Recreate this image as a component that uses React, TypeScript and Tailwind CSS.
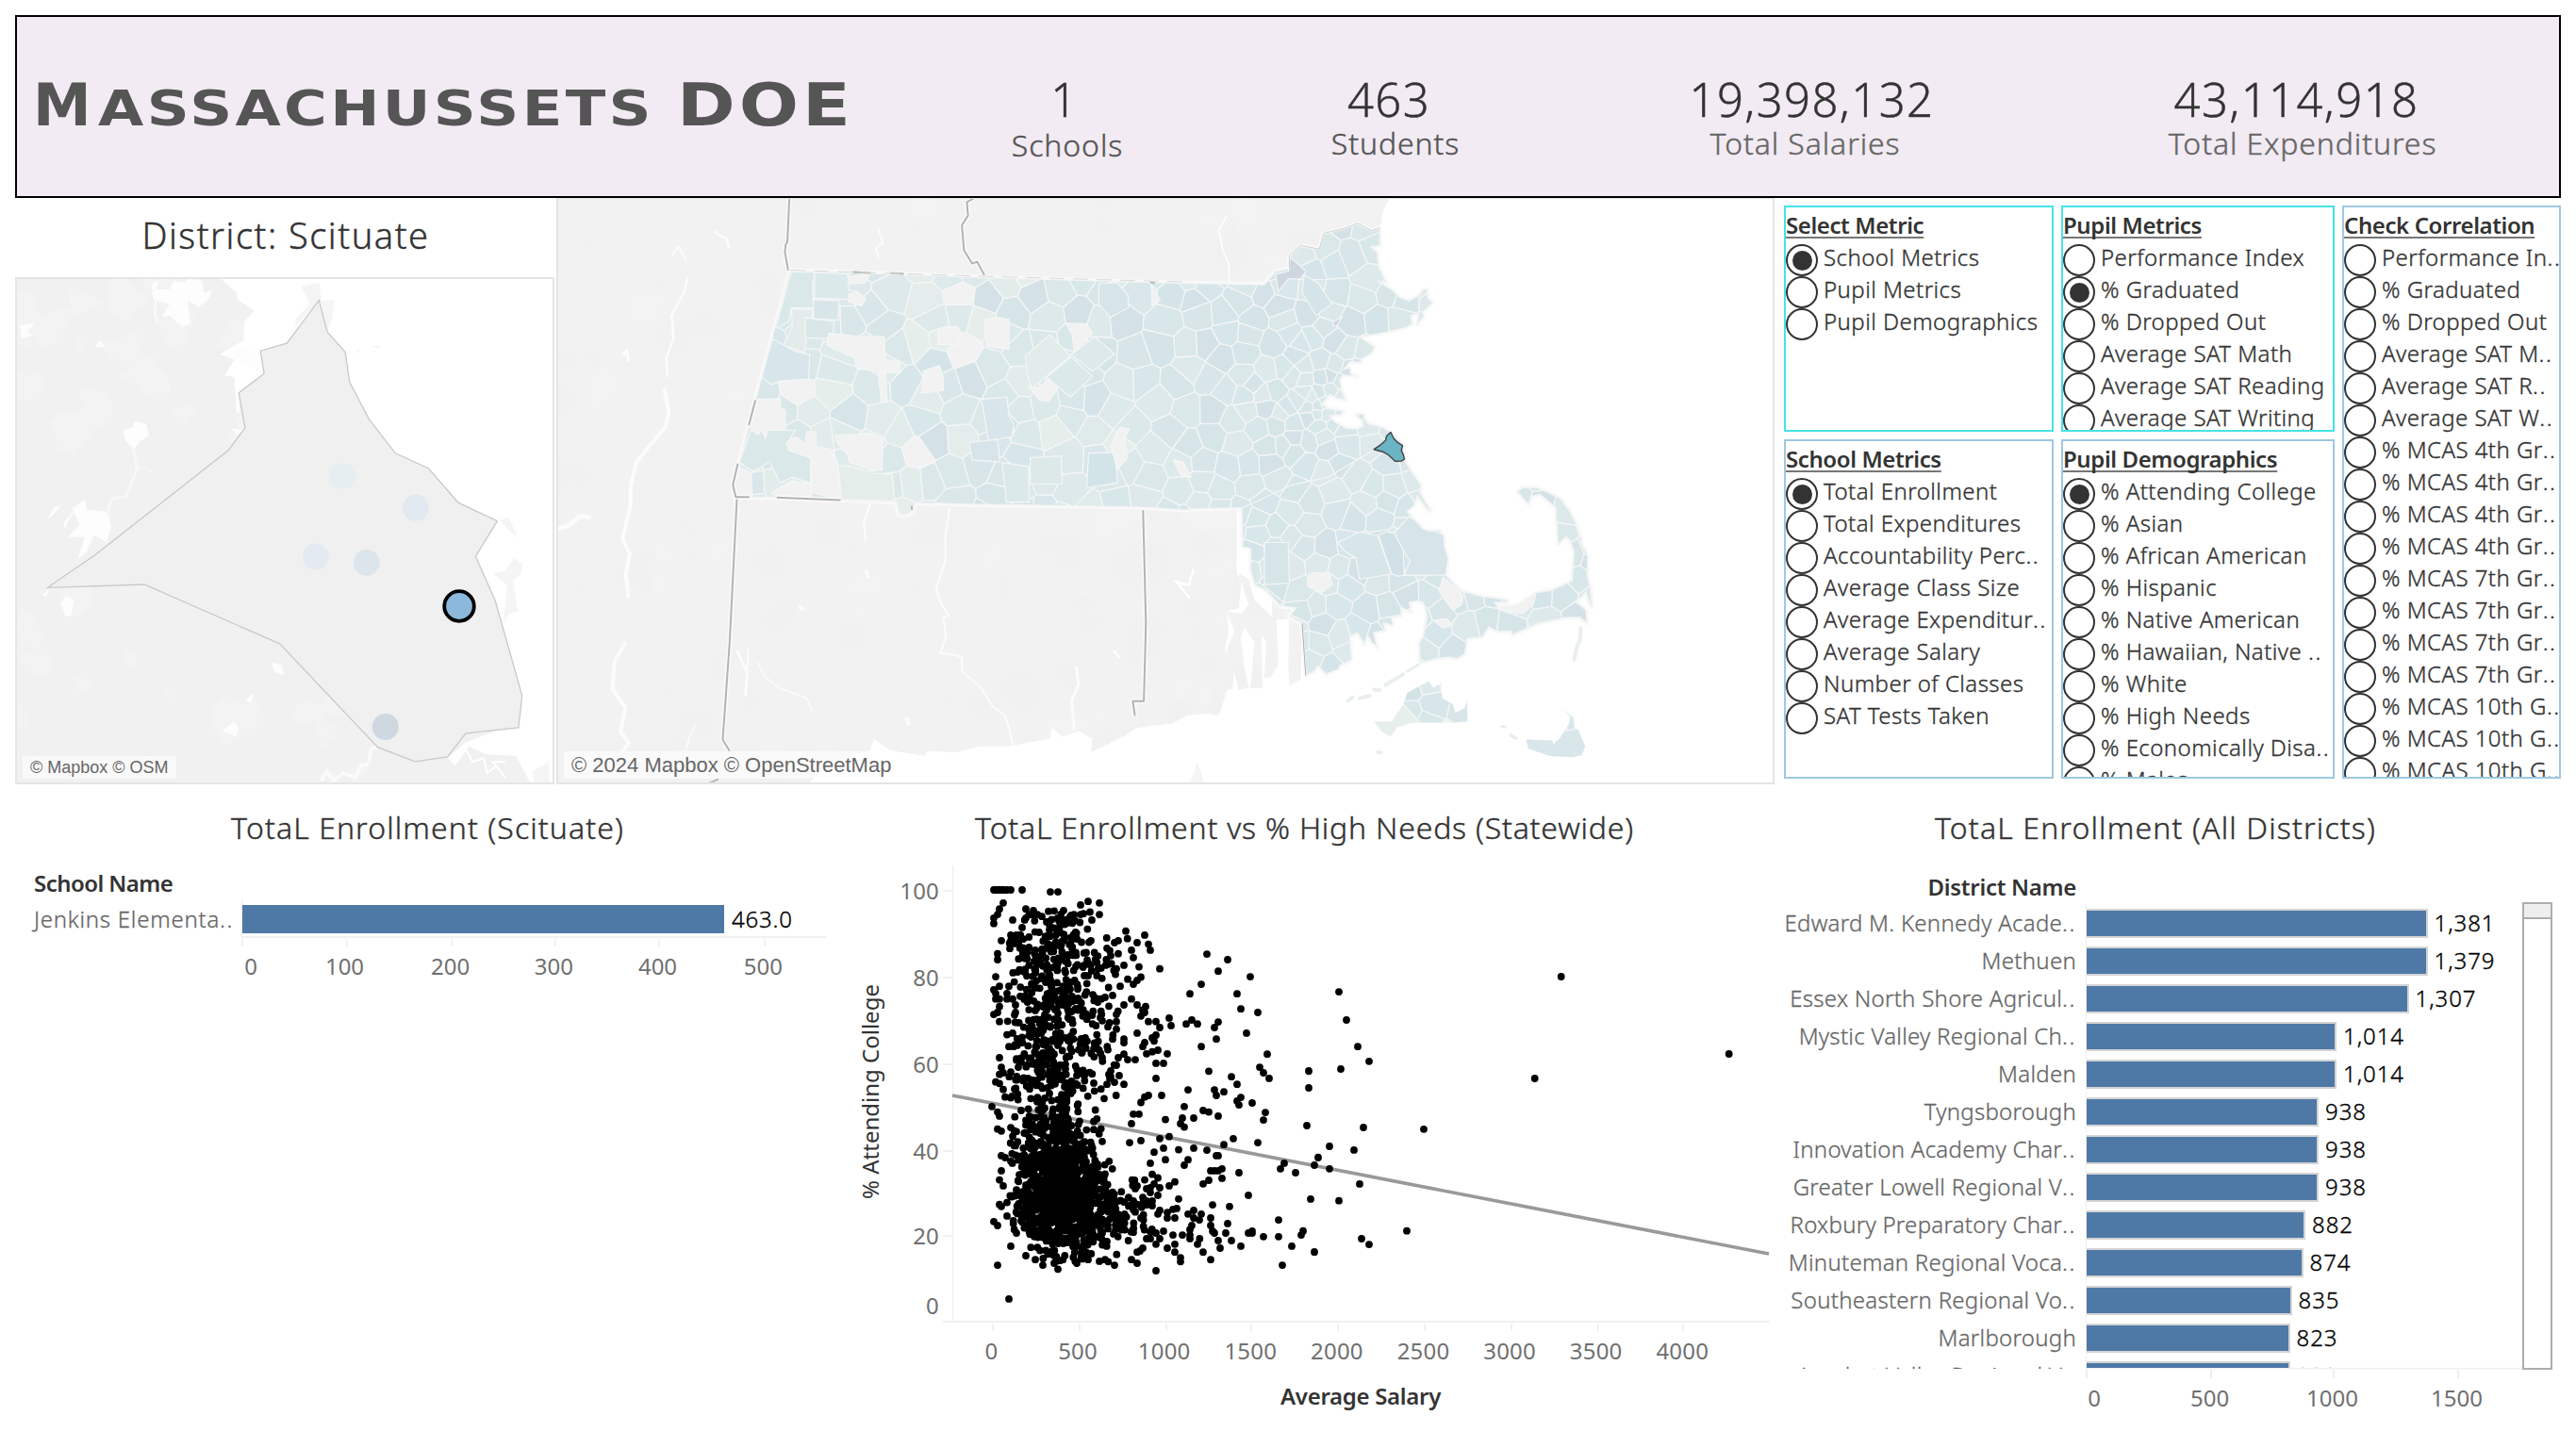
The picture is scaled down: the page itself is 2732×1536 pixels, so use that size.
type Pt = [number, number];

// Deterministic pseudo random generator
function rng(seed: number) {
  let s = seed;
  return () => {
    s |= 0;
    s = (s + 0x6d2b79f5) | 0;
    let t = Math.imul(s ^ (s >>> 15), 1 | s);
    t = (t + Math.imul(t ^ (t >>> 7), 61 | t)) ^ t;
    return ((t ^ (t >>> 14)) >>> 0) / 4294967296;
  };
}

const parse = (s: string): Pt[] => s.trim().split(/\s+/).map((p) => p.split(",").map(Number) as Pt);
const project = (ox: number, oy: number, sx: number, sy: number) => (s: string): Pt[] =>
  parse(s).map(([x, y]) => [ox + x / sx, oy + y / sy]);
const toPath = (pts: Pt[], close = true) =>
  "M" + pts.map(([x, y]) => `${x.toFixed(1)} ${y.toFixed(1)}`).join("L") + (close ? "Z" : "");

const west = project(580, 200, 2.306, 2.45);
const east = project(1240, 200, 2.376, 2.45);
const town = project(0, 200, 2.613, 2.45);

// Label whose trailing ".." is set a little wider than the rest
function Clipped({ text }: { text: string }) {
  if (!text.endsWith("..")) return <>{text}</>;
  return (
    <>
      {text.slice(0, -2)}
      <span className="tracking-[1.6px]">..</span>
    </>
  );
}

/* ---------------------------------- header --------------------------------- */

const KPIS = [
  { value: "1", label: "Schools", col: "w-[346px]", v: "pr-1", l: "pl-0.5 text-[#555] mt-[2px]" },
  { value: "463", label: "Students", col: "w-[346px]", v: "pr-2", l: "pl-1.5 text-[#555]" },
  { value: "19,398,132", label: "Total Salaries", col: "w-[536px]", v: "pl-[7px]", l: "pr-[7px] text-[#666]" },
  { value: "43,114,918", label: "Total Expenditures", col: "w-[506px]", v: "pr-[7px]", l: "pl-1.5 text-[#666]" },
];

function Header() {
  return (
    <header className="flex h-[194px] border-2 border-black bg-[#f2ebf3]">
      <h1 className="flex w-[940px] shrink-0 items-baseline pt-[58px] pl-[17px] font-['DejaVu_Sans'] text-[62px] leading-[72px] font-bold text-[#555]">
        <span className="inline-block w-[69px] shrink-0">
          <span className="inline-block origin-left">M</span>
        </span>
        <span className="inline-block w-[614px] shrink-0">
          <span className="inline-block origin-left scale-x-120 text-[52px] tracking-[2.8px]">ASSACHUSSETS</span>
        </span>
        <span className="inline-block origin-left scale-x-120 tracking-[3.3px]">DOE</span>
      </h1>
      {KPIS.map((k) => (
        <div key={k.label} className={`${k.col} shrink-0 pt-[59px] text-center font-light [-webkit-text-stroke:0.4px]`}>
          <div className={`${k.v} text-[49px] leading-[56px] tracking-[1.4px] text-[#333]`}>{k.value}</div>
          <div className={`${k.l} text-[32px] leading-[38px] tracking-[0.9px]`}>{k.label}</div>
        </div>
      ))}
    </header>
  );
}

/* -------------------------------- district map ----------------------------- */

const T_SEA =
  "610,233 655,270 660,290 705,318 678,345 675,395 610,430 650,445 622,485 650,490 655,580 664,585 662,531 732,481 722,422 795,402 884,290 907,373 957,425 969,503 1023,600 1096,688 1187,727 1270,816 1378,864 1318,956 1372,1070 1447,1318 1437,1401 1385,1405 1290,1440 1240,1480 1262,1500 1300,1450 1345,1470 1430,1475 1470,1545 1537,1545 1537,233";
const T_DISTRICT =
  "884,290 907,373 957,425 969,503 1023,600 1096,688 1187,727 1270,816 1378,864 1318,956 1372,1070 1447,1318 1437,1401 1290,1416 1240,1477 1150,1489 1047,1452 775,1183 400,1029 132,1037 265,951 633,680 679,622 662,531 732,481 722,422 795,402";
const T_SPITS = [
  "835,255 885,245 890,290 928,290 920,340 905,375 884,290 815,362 822,335 860,300",
  "1385,862 1410,855 1435,908 1410,890",
  "1365,1000 1400,995 1425,960 1447,975 1445,1000 1422,1020 1435,1100 1410,1105 1395,1130 1405,1030",
  "985,420 995,418 992,428",
  "1032,410 1055,408 1045,415",
  "1475,1515 1520,1490 1525,1545 1480,1545",
];
const T_WATER = [
  "420,250 440,240 432,262 470,262 480,240 512,245 520,233 560,240 566,270 590,265 575,290 550,308 520,290 528,350 505,360 470,330 448,335 470,300 425,288",
  "342,628 368,620 372,605 405,612 413,640 385,660 372,678 348,655",
  "200,830 235,808 240,835 300,840 308,880 295,920 262,900 240,945 215,965 235,905 188,905 220,875",
  "175,870 215,825 190,862 180,885",
  "130,860 150,828 168,824 150,845",
  "168,1080 182,1058 205,1068 198,1110 182,1113",
  "752,1232 780,1238 788,1265 762,1258",
  "615,1410 650,1385 662,1405 655,1425",
  "55,355 95,350 75,375 92,380 60,390",
  "262,412 278,395 293,412",
  "118,1058 135,1042 128,1060",
  "680,1328 705,1310 695,1338",
  "640,625 676,626 660,640",
  "610,430 690,405 722,420 725,480 680,455",
];

const SCHOOLS: [number, number, string][] = [
  [949, 747, "#e6eef1"],
  [1152, 830, "#e1e8ef"],
  [875, 957, "#e4eaf1"],
  [1016, 972, "#dde5ec"],
  [1068, 1399, "#cfd7e0"],
];

function blobs(seed: number, n: number, x0: number, y0: number, w: number, h: number, size: number) {
  const r = rng(seed);
  let d = "";
  for (let i = 0; i < n; i++) {
    const cx = x0 + r() * w;
    const cy = y0 + r() * h;
    const s = size * (0.3 + r());
    const pts: Pt[] = [];
    for (let k = 0; k < 9; k++) {
      const a = (k / 9) * Math.PI * 2;
      const q = s * (0.45 + r() * 0.8);
      pts.push([cx + Math.cos(a) * q, cy + Math.sin(a) * q]);
    }
    d += toPath(pts);
  }
  return d;
}

function DistrictMap() {
  return (
    <div className="relative h-[538px] w-[572px] border-2 border-[#e5e5e5]">
      <svg viewBox="18 296 568 534" className="block h-full w-full">
        <rect x="16" y="294" width="572" height="538" fill="#f1f1f1" />
        <path d={blobs(5, 26, 16, 300, 260, 180, 24)} fill="#f5f5f5" opacity="0.5" />
        <path d={blobs(8, 22, 16, 560, 460, 260, 22)} fill="#f3f3f3" opacity="0.7" />
        <path d={toPath(town(T_SEA))} fill="#fff" />
        {T_SPITS.map((s) => (
          <path key={s} d={toPath(town(s))} fill="#f5f5f5" />
        ))}
        {T_WATER.map((s) => (
          <path key={s} d={toPath(town(s))} fill="#fdfdfd" />
        ))}
        <path d={toPath(town("368,670 380,728 350,800 310,805 295,850"), false)} fill="none" stroke="#f8f8f8" strokeWidth="3" />
        <path d={toPath(town("380,728 405,726 420,738"), false)} fill="none" stroke="#f8f8f8" strokeWidth="2" />
        <path d={toPath(town("432,240 430,330 436,350"), false)} fill="none" stroke="#fbfbfb" strokeWidth="2" />
        <path
          d={toPath(town("890,1540 905,1515 925,1538 950,1520 985,1530 1000,1500 1020,1495 1030,1455 1045,1452"), false)}
          fill="none"
          stroke="#fafafa"
          strokeWidth="4"
        />
        <path
          d={toPath(town("1290,1455 1310,1490 1340,1480 1350,1520 1375,1500 1400,1530 1365,1490 1400,1490"), false)}
          fill="none"
          stroke="#fff"
          strokeWidth="2"
        />
        <path d={toPath(town(T_DISTRICT))} fill="#f0f0f0" stroke="#c9c9c9" strokeWidth="1.3" />
        {SCHOOLS.map(([x, y, c]) => (
          <circle key={x} cx={x / 2.613} cy={200 + y / 2.45} r="14" fill={c} />
        ))}
        <circle cx="487" cy="643" r="15.8" fill="#8bb8db" stroke="#000" strokeWidth="3.8" />
      </svg>
      <div className="absolute bottom-[4px] left-[6px] h-6 bg-white/60 px-2 font-['Liberation_Sans',sans-serif] text-[18px] leading-6 text-[#666]">
        © Mapbox © OSM
      </div>
    </div>
  );
}

/* --------------------------------- state map ------------------------------- */

const MA: Pt[] = [
  ...west("595,213 660,215 830,222 1100,232 1568,246"),
  ...east(
    "240,250 268,215 303,208 303,175 330,150 378,158 390,118 440,105 475,92 510,110 531,103 531,148 508,152 524,165 528,205 548,245 525,240 560,262 580,282 605,292 632,275 640,262 650,262 652,285 665,297 640,320 641,335 625,353 628,325 610,330 612,352 595,362 540,375 480,386 518,412 508,430 490,440 480,452 455,450 440,470 455,465 458,482 474,488 440,485 430,495 435,525 445,550 420,545 405,535 385,560 400,572 440,578 432,588 405,590 415,605 445,622 470,625 490,618 485,602 470,588 488,586 500,610 540,622 558,633 590,665 592,705 635,772 632,790 660,838 652,836 625,800 618,822 600,840 640,885 655,890 680,888 692,902 694,930 703,960 697,1005 735,1045 790,1060 850,1068 852,1075 820,1076 830,1090 880,1082 925,1050 960,1045 1015,1020 1020,945 1010,915 1000,905 980,925 975,850 975,830 935,795 915,800 905,820 877,788 890,777 930,778 985,805 1010,840 1030,880 1040,925 1055,955 1053,1005 1062,1040 1066,1088 1060,1080 1050,1050 1025,1075 1050,1095 1053,1130 1035,1115 1000,1115 930,1130 865,1160 862,1150 830,1152 805,1140 790,1165 750,1170 745,1210 725,1222 708,1218 675,1222 632,1232 630,1180 640,1165 650,1110 640,1075 625,1072 605,1075 610,1100 585,1090 585,1110 560,1115 565,1135 540,1130 545,1148 515,1155 525,1192 510,1180 500,1160 492,1185 475,1155 455,1165 460,1225 430,1240 425,1250 395,1262 375,1240 365,1255 345,1265 335,1130 302,1112 320,1090 280,1085 262,1065 245,1045 215,1030 205,990 205,935 185,932 183,830 47,833",
  ),
  ...west(
    "1568,836 1455,828 1000,820 960,818 900,818 895,838 880,848 862,848 855,815 720,810 560,803 460,803 455,770 470,715 510,550",
  ),
];
const VINEYARD = east(
  "515,1385 560,1385 590,1340 600,1310 655,1280 665,1298 685,1285 688,1325 715,1340 722,1362 745,1350 750,1330 752,1385 720,1388 610,1388 575,1400 558,1425 535,1412",
);
const NANTUCKET = east(
  "900,1432 965,1435 968,1445 985,1428 1008,1390 1010,1372 992,1352 1018,1375 1022,1405 1030,1405 1048,1450 1040,1472 1015,1478 960,1475 905,1455",
);
const SCITUATE = east(
  "516,678 530,668 545,655 548,643 558,633 566,650 576,660 588,668 585,680 590,692 593,703 586,708 570,709 552,692 538,684",
);
const LAND: Pt[] = [
  [588, 206],
  ...east("557,20 538,60 535,85 531,103 480,240 300,600 300,800 335,1130 332,1275 303,1292 300,1240 302,1120 270,1120 275,1240 255,1270 240,1270 245,1180 232,1160 235,1298 205,1298 215,1180 190,1140 180,1170 190,1250 200,1298 175,1302 165,1260 145,1200 165,1150 145,1100 185,1105 200,1080 175,1000 200,1015 215,1070 260,1115 255,900 170,835"),
  ...east("170,1000 182,1020 175,1090 145,1100 150,1150 140,1200 165,1230 160,1300 145,1305 125,1370 100,1365"),
  ...west("1568,1368 1530,1390 1440,1402 1415,1422 1330,1465 1335,1430 1300,1410 1260,1425 1235,1400 1230,1430 1200,1435 1130,1450 1060,1450 1000,1465 930,1462 925,1475 840,1460 800,1430 790,1460 700,1490 640,1545 600,1568 20,1568"),
  [588, 832],
];
const RIVERS: [string, number][] = [
  ["345,230 335,270 305,330 310,390 292,440 295,490", 2.5],
  ["287,520 298,580 290,620 250,670 220,710", 4],
  ["220,710 205,770 205,820 185,910 203,950 193,1000 200,1065", 4],
  ["192,1180 165,1230 160,1300 192,1350 180,1410 200,1440 180,1470", 4],
  ["985,830 975,900 975,965 952,1040 965,1080 983,1110 970,1115 976,1165 962,1207 1000,1212 1015,1220 1015,1255 1060,1295 1090,1345 1120,1370 1130,1400 1140,1450", 2],
  ["790,820 775,870 780,915", 2],
  ["1295,1240 1300,1290 1283,1330 1290,1410", 3],
  ["515,1230 530,1265 570,1300 600,1310 635,1325 650,1358", 1.5],
  ["465,1200 490,1260 485,1320", 3],
  ["493,1195 488,1290", 2],
  ["410,110 420,120 440,130 445,155", 2.5],
  ["305,175 322,150 340,185", 2],
  ["810,105 822,140 805,155 810,180", 2],
  ["20,885 50,878 80,852 108,855", 5],
  ["185,435 195,420 200,450", 3],
  ["340,1460 350,1420 365,1390", 1.5],
  ["780,990 785,1012", 3],
  ["1385,1200 1402,1220", 3],
  ["615,1085 628,1095", 4],
  ["880,1375 885,1395", 4],
  ["1538,1020 1560,1030", 3],
];
const BORDERS = [
  "593,25 588,140 584,145 582,165 590,213",
  "1045,25 1027,35 1030,70 1015,95 1020,160 1040,195 1052,190 1070,225",
  "465,803 447,1180 430,1432 447,1462",
  "1458,836 1465,1130 1460,1332 1433,1332 1438,1370",
  "494,615 510,550",
  "467,715 455,770 462,802 495,802",
  "562,803 718,810",
];
const SHORT_BORDERS = ["748,217 792,219", "840,220 873,222", "1475,244 1487,245", "397,1545 420,1535", "892,825 893,835"];

const TINTS_WEST = ["#e4edeb", "#dfebea", "#dde9ea", "#dbe8e9", "#e6eeeb", "#e2eceb", "#dce9ea", "#d9e6ea"];
const TINTS_EAST = ["#dbe8e9", "#d8e6e9", "#d4e4e8", "#d7e6ea", "#dae8e9", "#d4e2e8", "#dde9ea", "#d6e6e8", "#d8e7e9"];

type Cell = { d: string; fill: string };

// Town mosaic: Voronoi cells grown from density-weighted seeds
function townCells(): Cell[] {
  const r = rng(42);
  const seeds: Pt[] = [];
  const radius = (x: number, y: number) => {
    const dist = Math.hypot(x - 1385, y - 425);
    const base = x < 1240 ? 22 : x < 1330 ? 19 : 18;
    return Math.min(base, 5.5 + dist * 0.13);
  };
  for (let i = 0; i < 16000; i++) {
    const x = 765 + r() * 930;
    const y = 232 + r() * 580;
    const q = radius(x, y) * (0.75 + r() * 0.7);
    if (seeds.every(([a, b]) => Math.hypot(a - x, b - y) > q * 1.12)) seeds.push([x, y]);
  }
  return seeds.map(([cx, cy]) => {
    let poly: Pt[] = [
      [cx - 45, cy - 45],
      [cx + 45, cy - 45],
      [cx + 45, cy + 45],
      [cx - 45, cy + 45],
    ];
    for (const [sx, sy] of seeds) {
      if ((sx === cx && sy === cy) || Math.abs(sx - cx) > 90 || Math.abs(sy - cy) > 90) continue;
      const nx = sx - cx;
      const ny = sy - cy;
      const k = (sx * sx + sy * sy - cx * cx - cy * cy) / 2;
      const side = (p: Pt) => p[0] * nx + p[1] * ny - k;
      const out: Pt[] = [];
      for (let i = 0; i < poly.length; i++) {
        const a = poly[i];
        const b = poly[(i + 1) % poly.length];
        const da = side(a);
        const db = side(b);
        if (da <= 0) out.push(a);
        if ((da < 0 && db > 0) || (da > 0 && db < 0)) {
          const t = da / (da - db);
          out.push([a[0] + (b[0] - a[0]) * t, a[1] + (b[1] - a[1]) * t]);
        }
      }
      poly = out;
    }
    const hole = cx < 1150 ? 0.03 : cx > 1500 && cy > 600 ? 0.1 : 0.005;
    const set = r() < (cx - 800) / 520 ? TINTS_EAST : TINTS_WEST;
    const fill = r() < hole ? "#f2f2f2" : set[Math.floor(r() * set.length)];
    return { d: toPath(poly), fill };
  });
}

const GAPS_WEST = [
  "505,548 570,546 572,570 583,575 583,628 540,628 535,650 525,628 515,640 495,620",
  "690,376 770,385 825,385 828,445 865,450 862,480 815,475 760,468 752,440 685,408",
  "705,642 790,636 822,650 820,730 800,735 740,712 735,690 712,665",
  "1070,342 1100,335 1130,340 1130,418 1075,410",
  "590,655 610,645 632,665 635,632 658,632 658,670 700,680 712,720 718,808 648,790 645,700 590,680",
  "735,228 790,224 778,245 742,248",
  "738,275 760,268 780,285 770,305 738,295",
  "920,475 960,460 970,490 970,525 915,532 922,500",
  "955,365 1005,358 1012,380 1005,405 958,405",
  "1270,350 1320,352 1335,375 1290,425 1285,380",
  "1180,515 1210,520 1222,495 1250,520 1228,552 1205,550",
  "470,725 500,740 502,800 465,803 458,770",
  "550,790 600,760 645,765 648,800 560,803",
  "1400,620 1425,625 1412,650 1420,700 1395,730 1380,670",
  "810,475 828,478 832,555 818,555",
  "1478,250 1500,290 1480,305",
];
const GAPS_EAST = [
  "348,1010 360,998 405,1000 410,1030 385,1050 350,1035",
  "690,1010 720,1035 740,1055 738,1080 715,1095 695,1070 680,1045",
  "830,1090 885,1065 925,1048 918,1080 890,1105 855,1100",
  "10,705 35,710 55,750 30,745",
  "665,1122 700,1118 715,1135 690,1142",
];
// Larger towns drawn on top of the mosaic
const TOWNS_WEST: [string, string][] = [
  ["598,216 655,218 650,250 652,310 598,310 592,345 565,362 560,360", "#dae8e9"],
  ["655,218 738,222 738,265 760,268 738,288 655,285", "#dce9eb"],
  ["652,288 715,291 713,342 652,338", "#d8e6ea"],
  ["598,312 648,314 650,335 635,340 638,370 630,425 578,408 600,360", "#e3ecea"],
  ["632,336 703,345 700,375 682,390 632,388", "#dae7e9"],
  ["552,390 605,422 643,432 640,495 570,500 550,510 525,490", "#d8e6eb"],
  ["500,628 608,628 585,665 645,702 645,765 600,750 570,765 545,710 505,735 470,712", "#dae8e9"],
  ["712,722 738,720 800,740 845,742 850,812 722,808", "#e4edea"],
  ["1063,548 1125,542 1130,590 1142,612 1138,645 1080,655", "#d8e5eb"],
  ["1222,490 1282,438 1335,488 1280,542", "#dce9ea"],
  ["1282,432 1340,385 1388,430 1335,475", "#dde9ea"],
  ["1170,435 1230,380 1280,435 1222,488 1185,520 1175,480", "#e2ecea"],
  ["1325,688 1390,685 1396,765 1320,778", "#d3e4e9"],
  ["1350,248 1395,245 1422,278 1422,310 1378,335 1350,300", "#d5e5ea"],
  ["1033,660 1102,652 1108,710 1040,706", "#d7e4ea"],
  ["1113,712 1178,722 1180,815 1124,815", "#dce9ea"],
  ["1182,700 1258,695 1260,768 1182,768", "#dde9e8"],
];
const TOWNS_EAST: [string, string][] = [
  ["705,960 700,1005 592,1005 607,968 590,940 567,895 605,852 655,885 692,900", "#d7e5ea"],
  ["527,900 548,892 567,895 590,940 592,1005 577,1008 560,1000", "#d1e1e7"],
  ["425,920 480,892 525,902 560,1002 480,1015 470,960 440,940", "#d6e6e9"],
  ["240,920 300,920 303,1025 240,1030", "#d6e6e8"],
  ["340,225 375,245 410,300 370,330 335,270", "#d4e4e8"],
  ["268,222 300,215 305,178 345,215 330,235 300,235 275,268", "#ced6e0"],
  ["415,345 435,335 422,358 412,355", "#ced6e0"],
];

function StateMap() {
  return (
    <div className="relative h-[622px] w-[1292px] border-2 border-t border-[#e5e5e5]">
      <svg viewBox="592 211 1288 619" className="block h-full w-full">
        <defs>
          <clipPath id="mass">
            <path d={toPath(MA) + toPath(VINEYARD) + toPath(NANTUCKET)} />
          </clipPath>
          <clipPath id="land">
            <path d={toPath(LAND)} />
          </clipPath>
        </defs>
        <path d={toPath(LAND)} fill="#f2f2f2" />
        <g clipPath="url(#land)">
          <path d={blobs(3, 110, 590, 210, 800, 620, 20)} fill="#efefef" opacity="0.45" />
          <path d={blobs(9, 70, 590, 210, 800, 620, 18)} fill="#f4f4f4" opacity="0.6" />
        </g>
        {RIVERS.map(([s, w]) => (
          <path key={s} d={toPath(west(s), false)} fill="none" stroke="#fcfcfc" strokeWidth={w} strokeLinejoin="round" />
        ))}
        <path d={toPath(east("145,70 125,110 135,160 150,195 152,245"), false)} fill="none" stroke="#fff" strokeWidth="1.5" />
        <path d={toPath(east("62,988 50,1030 18,1022 52,1065"), false)} fill="none" stroke="#fff" strokeWidth="2.5" />
        <path d={toPath(MA)} fill="#f2f2f2" stroke="#fafafa" strokeWidth="5" strokeLinejoin="round" />
        <g clipPath="url(#mass)" stroke="#f5f6f6" strokeWidth="1.2">
          {townCells().map((c) => (
            <path key={c.d} d={c.d} fill={c.fill} />
          ))}
          {TOWNS_WEST.map(([s, fill]) => (
            <path key={s} d={toPath(west(s))} fill={fill} />
          ))}
          {GAPS_WEST.map((s) => (
            <path key={s} d={toPath(west(s))} fill="#f2f2f2" />
          ))}
          {GAPS_EAST.map((s) => (
            <path key={s} d={toPath(east(s))} fill="#f2f2f2" />
          ))}
          {TOWNS_EAST.map(([s, fill]) => (
            <path key={s} d={toPath(east(s))} fill={fill} />
          ))}
          <path d={toPath(east("185,830 310,770 400,750 515,680"), false)} fill="none" />
          <path d={toPath(east("515,1385 560,1385 590,1340 632,1388 575,1400 558,1425 535,1412"))} fill="#e7efec" />
          <path d={toPath(east("895,1425 1060,1400 1060,1490 895,1490"))} fill="#d9e6ea" />
        </g>
        <path d={toPath(MA)} fill="none" stroke="#f4f4f4" strokeWidth="1.5" />
        <g fill="none" stroke="#e9eeee" strokeLinecap="round">
          <path d={toPath(east("450,1332 462,1322"), false)} strokeWidth="4" />
          <path d={toPath(east("480,1325 505,1318"), false)} strokeWidth="4" />
          <path d={toPath(east("516,1302 530,1304"), false)} strokeWidth="4" />
          <path d={toPath(east("545,1290 590,1262"), false)} strokeWidth="4" />
          <path d={toPath(east("600,1255 628,1238"), false)} strokeWidth="3" />
          <path d={toPath(east("838,1398 846,1399"), false)} strokeWidth="3" />
          <path d={toPath(east("860,1420 873,1428"), false)} strokeWidth="4" />
          <path d={toPath(east("525,1464 534,1466"), false)} strokeWidth="4" />
          <path d={toPath(east("1037,1142 1036,1170 1028,1190 1020,1224"), false)} strokeWidth="4" />
        </g>
        <path d={toPath(east("70,1490 82,1520 85,1545 52,1545 60,1525"))} fill="#f5f5f5" />
        {BORDERS.map((s) => (
          <g key={s} fill="none" strokeLinejoin="round">
            <path d={toPath(west(s), false)} stroke="#fbfbfb" strokeWidth="5" />
            <path d={toPath(west(s), false)} stroke="#b3b3b3" strokeWidth="2" />
          </g>
        ))}
        {SHORT_BORDERS.map((s) => (
          <path key={s} d={toPath(west(s), false)} fill="none" stroke="#b8b8b8" strokeWidth="2" />
        ))}
        <path d={toPath(west("595,212 830,220 1100,229 1568,243"), false)} fill="none" stroke="#d9d9d9" strokeDasharray="16 9" />
        <path d={toPath(east("303,208 303,172 330,148 378,157 390,116 440,104 475,90 510,109 531,102"), false)} fill="none" stroke="#c9c9c9" strokeWidth="0.8" />
        <path d={toPath(east("335,1130 344,1266"), false)} fill="none" stroke="#b0b0b0" />
        <path d={toPath(SCITUATE)} fill="#6ab4c3" stroke="#444" strokeWidth="1.4" strokeLinejoin="round" />
      </svg>
      <div className="absolute bottom-[4px] left-[6px] h-[29px] bg-white/60 px-2 font-['Liberation_Sans',sans-serif] text-[22px] leading-[29px] text-[#666]">
        © 2024 Mapbox © OpenStreetMap
      </div>
    </div>
  );
}

/* -------------------------------- radio panels ----------------------------- */

function RadioPanel({ title, items, selected, className }: { title: string; items: string[]; selected?: number; className: string }) {
  return (
    <section className={`overflow-hidden border-2 whitespace-nowrap text-[#333] ${className}`}>
      <h2 className="h-[39px] text-[24px] leading-[38px] font-semibold tracking-[-0.4px] underline decoration-[#777] decoration-2 underline-offset-[3px] [text-decoration-skip-ink:none]">
        {title}
      </h2>
      {items.map((t, i) => (
        <label key={i} className="flex h-[34px]">
          <span className="flex size-[34px] shrink-0 items-center justify-center rounded-full border-2 border-[#333]">
            {i === selected && <span className="size-[21px] rounded-full bg-[#333]" />}
          </span>
          <span className="ml-[6px] text-[24px] leading-[28px] font-light tracking-[0.45px] [-webkit-text-stroke:0.35px]">
            <Clipped text={t} />
          </span>
        </label>
      ))}
    </section>
  );
}

function Panels() {
  return (
    <div className="mt-2 ml-[10px] grid h-[608px] grid-cols-[286px_290px_232px] grid-rows-[240px_360px] gap-2">
      <RadioPanel title="Select Metric" selected={0} className="border-[#45e3e8]" items={["School Metrics", "Pupil Metrics", "Pupil Demographics"]} />
      <RadioPanel
        title="Pupil Metrics"
        selected={1}
        className="border-[#45e3e8]"
        items={["Performance Index", "% Graduated", "% Dropped Out", "Average SAT Math", "Average SAT Reading", "Average SAT Writing"]}
      />
      <RadioPanel
        title="Check Correlation"
        className="row-span-2 border-[#9fc8e3]"
        items={[
          "Performance In..",
          "% Graduated",
          "% Dropped Out",
          "Average SAT M..",
          "Average SAT R..",
          "Average SAT W..",
          "% MCAS 4th Gr..",
          "% MCAS 4th Gr..",
          "% MCAS 4th Gr..",
          "% MCAS 4th Gr..",
          "% MCAS 7th Gr..",
          "% MCAS 7th Gr..",
          "% MCAS 7th Gr..",
          "% MCAS 7th Gr..",
          "% MCAS 10th G..",
          "% MCAS 10th G..",
          "% MCAS 10th G..",
        ]}
      />
      <RadioPanel
        title="School Metrics"
        selected={0}
        className="border-[#9fc8e3]"
        items={["Total Enrollment", "Total Expenditures", "Accountability Perc..", "Average Class Size", "Average Expenditur..", "Average Salary", "Number of Classes", "SAT Tests Taken"]}
      />
      <RadioPanel
        title="Pupil Demographics"
        selected={0}
        className="border-[#9fc8e3]"
        items={[
          "% Attending College",
          "% Asian",
          "% African American",
          "% Hispanic",
          "% Native American",
          "% Hawaiian, Native ..",
          "% White",
          "% High Needs",
          "% Economically Disa..",
          "% Males",
        ]}
      />
    </div>
  );
}

/* ---------------------------------- charts --------------------------------- */

function ChartTitle({ children, className }: { children: string; className: string }) {
  return (
    <h2
      className={`mt-6 h-11 text-center text-[32px] leading-[44px] font-light whitespace-nowrap text-[#333] [-webkit-text-stroke:0.4px] ${className}`}
    >
      {children}
    </h2>
  );
}

function SchoolChart() {
  const ticks: [number, number, string][] = [
    [257, 266, "0"],
    [367.5, 365.5, "100"],
    [479.5, 477.6, "200"],
    [589, 587.3, "300"],
    [699, 697.5, "400"],
    [811, 809.4, "500"],
  ];
  return (
    <section className="w-[884px]">
      <ChartTitle className="w-[875px] tracking-[1.1px]">TotaL Enrollment (Scituate)</ChartTitle>
      <div className="mt-[21px] ml-5 text-[24px] leading-8 font-semibold tracking-[-0.55px] text-[#333]">School Name</div>
      <div className="ml-5 flex h-10 items-end">
        <div className="w-[220px] text-[24px] leading-9 font-light tracking-[0.75px] whitespace-nowrap text-[#666] [-webkit-text-stroke:0.3px]">
          <Clipped text="Jenkins Elementa.." />
        </div>
        <div className="flex h-10 items-end border-l border-[#eee]">
          <div className="mb-[3px] h-[30px] w-[511px] bg-[#4e79a7]" />
          <div className="ml-2 text-[24px] leading-9 font-light tracking-[0.8px] text-black [-webkit-text-stroke:0.35px]">463.0</div>
        </div>
      </div>
      <svg viewBox="16 993 884 60" className="block h-[60px] w-[884px]">
        <rect x="256" y="993" width="621" height="2" fill="#f1f1f1" />
        {ticks.map(([x, l, t]) => (
          <g key={t}>
            <rect x={x - 1} y="996" width="2" height="8" fill="#f1f1f1" />
            <text x={l} y="1034" textAnchor="middle" className="fill-[#6f6f6f] text-[24px]">
              {t}
            </text>
          </g>
        ))}
      </svg>
    </section>
  );
}

const scatter = project(900, 840, 3, 2.376);
const scatterRight = project(1380, 840, 3, 2.306);

const OUTLIERS =
  "882,351 942,361 887,370 918,380 954,384 960,399 900,399 906,418 924,441 990,446 888,472 918,475 930,467 906,485 900,522 918,537 945,541 936,550 942,556 930,565 954,579 978,579 1020,570 990,594 1026,589 918,608 978,613 966,620 972,628 942,632 936,642 984,651 1014,660 948,660 966,655 912,675 888,675 978,684 1002,684 978,722 996,765 954,765 942,769 930,783 1068,793 906,812 924,812 900,836 1008,826 1062,822 1056,836 1068,845 1098,822 1128,803 1146,807 1176,817 894,884 930,879 990,874 1020,869 1002,898 972,908 1008,927 1050,902 1098,898 1080,927 1068,941 960,936 966,964 984,973 942,978 972,988 990,998 1020,993 1038,983 918,993 948,1000 960,1010 984,1017 966,1031 1050,1026 936,1022 918,1040 942,1041 912,1059 990,1055 984,1064 1014,1060 1032,1052 1044,1050 1038,1074 1014,1074 1080,1064 1098,1055 1098,1074 1122,1064 1116,1079 1152,1074 1158,1041 1212,1045 1206,1088 1152,1093 1092,1093 1086,1103 1032,1117 1062,1117 1086,1117 1086,1126 1117,1126 1110,1140 1038,1140 1014,1150 1038,1160 1056,1174 1056,1184 1128,1160 1152,1179 1182,1150 1176,1131 1218,1131 1200,1112 1164,1112 1158,1107 1248,1145 1272,1112 1284,1107 1284,1112 1320,1121 1368,1121 1368,1079 1410,1145 1440,1117 1446,1107 1380,1193 1482,1160 978,1207 918,1188 900,1179 936,1150 948,1126 960,1126 990,1126 978,1140 918,1160 978,1112 1002,1107 1272,1017 1470,1026 1242,960 1188,950 1188,974 1176,955 1164,955 1152,955 1146,979 1128,988 1170,917 1176,917 1140,903 1194,889 1224,874 1302,884 1386,936 1374,950 1422,960 1482,941 1494,922 1458,841 1326,808 1320,827 1284,784 1248,770 1236,779 1242,789 1170,765 1164,751 1194,756 1236,737 1218,718 1146,704 1080,751 1308,694 1320,708 1338,722 1332,661 1464,704 1464,746 1122,642 1170,623 1164,594 1176,580 1110,585 1092,575 1074,585 1266,608 1302,556 1248,547 1236,509 1086,509 1122,485 1176,452 1278,466 1206,423 1140,409";
const RIGHT_OUTLIERS =
  "827,452 1361,641 743,701 390,825 336,1074 120,489 144,558 180,623 216,659 126,678 24,682 24,724 18,816 198,821 90,867 168,876 54,894 42,913 90,922 186,959 30,996 120,1000 6,1074 192,1093 216,1107 42,1125";
const LEFT_POINTS =
  "462,247 467,247 472,247 477,247 482,247 488,247 494,247 504,247 516,247 552,247 642,252 666,252 492,280 480,295 474,309 462,318 462,332 522,323 486,375 474,408 474,423 468,466 480,490 462,499 468,508 468,522 480,522 480,541 474,556 462,561 480,579 510,642 480,670 486,694 480,712 492,708 468,731 480,735 492,750 498,769 456,793 474,807 480,817 474,850 486,855 516,361 516,375 534,361 564,295 588,299 564,318 552,342 738,285 762,276 798,280 798,309 684,299 510,490 504,508 504,522 522,522 504,612 522,608 486,917 498,922 516,931 486,955 480,978 492,993 480,1040 486,1045 504,1035 504,1069 462,1083 474,1093 516,1145 534,1112 474,1193 510,1278 564,1169 594,1179 618,1193 666,1203 654,1188 726,1188 798,1183 816,1179 846,1193 738,309 774,323 876,437 852,446 846,380 858,375 834,413 858,408 876,537 840,513 816,518 864,490 852,561 852,579 852,598 840,623 876,623 876,632 876,661 858,670 888,675 852,689 876,737 846,732 834,703 834,718 822,737";

function scatterCloud(): Pt[] {
  const r = rng(77);
  const gauss = () => Math.sqrt(-2 * Math.log(r() + 1e-9)) * Math.cos(2 * Math.PI * r());
  const pts: string[] = [];
  const add = (n: number, gen: () => Pt, ok: (p: Pt) => boolean) => {
    let k = 0;
    while (k < n) {
      const p = gen();
      if (ok(p)) {
        pts.push(`${p[0].toFixed(0)},${p[1].toFixed(0)}`);
        k++;
      }
    }
  };
  // dense lower core
  add(
    780,
    () => [680 + gauss() * 75, 1035 + gauss() * 72],
    ([x, y]) => x > 520 && x < 860 && y > 850 && y < 1185 - Math.max(0, 620 - x) * 0.7,
  );
  add(290, () => [645 + gauss() * 72, 890 + gauss() * 60], ([x, y]) => x > 510 && x < 810 && y > 770 && y < 1050);
  // upper spread
  add(350, () => [670 + gauss() * 110, 300 + r() * 480], ([x, y]) => x > 505 && x < 870 && (y > 350 || Math.abs(x - 670) < 110));
  add(140, () => [665 + gauss() * 85, 340 + r() * 260], ([x]) => x > 530 && x < 830);
  add(60, () => [630 + gauss() * 60, 600 + r() * 180], ([x]) => x > 530);
  // right shoulder
  add(85, () => [860 + gauss() * 60, 1060 + gauss() * 50], ([x, y]) => x > 780 && x < 970 && y < 1170);
  return scatter(pts.join(" "));
}

const dots = (pts: Pt[]) => pts.map(([x, y]) => `M${x.toFixed(1)} ${y.toFixed(1)}h0`).join("");

function ScatterChart() {
  const yTicks: [number, number, string][] = [
    [945, 954, "100"],
    [1037, 1046, "80"],
    [1129, 1138, "60"],
    [1221, 1230, "40"],
    [1311, 1320, "20"],
    [1402, 1394, "0"],
  ];
  return (
    <section className="w-[982px]">
      <ChartTitle className="w-[967px] tracking-[0.8px]">TotaL Enrollment vs % High Needs (Statewide)</ChartTitle>
      <svg viewBox="900 900 982 620" className="block h-[620px] w-[982px]">
        <g fill="#f1f1f1">
          <rect x="1010" y="918" width="1.5" height="485" />
          <rect x="1010" y="1401" width="867" height="2" />
          {yTicks.map(([y]) => (
            <rect key={y} x="1000" y={y - 1} width="10" height="2" />
          ))}
          {[1053, 1145, 1237, 1327, 1419, 1511, 1603, 1695, 1785].map((x) => (
            <rect key={x} x={x - 1} y="1404" width="2" height="8" />
          ))}
        </g>
        <g className="fill-[#6f6f6f] text-[24px] tracking-[0.2px]">
          {yTicks.map(([, y, t]) => (
            <text key={t} x="996" y={y} textAnchor="end">
              {t}
            </text>
          ))}
          {["0", "500", "1000", "1500", "2000", "2500", "3000", "3500", "4000"].map((t, i) => (
            <text key={t} x={1051.5 + i * 91.6} y="1442" textAnchor="middle">
              {t}
            </text>
          ))}
        </g>
        <text x="1443" y="1490" textAnchor="middle" className="fill-[#333] text-[24px] font-semibold tracking-[-0.3px]">
          Average Salary
        </text>
        <text transform="translate(932 1158) rotate(-90)" textAnchor="middle" className="fill-[#333] text-[24px]">
          % Attending College
        </text>
        <path d="M1010 1162L1876 1330" stroke="#999" strokeWidth="3.6" fill="none" />
        <path
          d={dots([...scatter(OUTLIERS), ...scatter(LEFT_POINTS), ...scatterRight(RIGHT_OUTLIERS), ...scatterCloud()])}
          stroke="#000"
          strokeWidth="7.8"
          strokeLinecap="round"
          fill="none"
        />
      </svg>
    </section>
  );
}

const DISTRICTS: [string, string, number][] = [
  ["Edward M. Kennedy Acade..", "1,381", 361.5],
  ["Methuen", "1,379", 361.5],
  ["Essex North Shore Agricul..", "1,307", 341.5],
  ["Mystic Valley Regional Ch..", "1,014", 265],
  ["Malden", "1,014", 265],
  ["Tyngsborough", "938", 246],
  ["Innovation Academy Char..", "938", 246],
  ["Greater Lowell Regional V..", "938", 246],
  ["Roxbury Preparatory Char..", "882", 232],
  ["Minuteman Regional Voca..", "874", 229.5],
  ["Southeastern Regional Vo..", "835", 217.5],
  ["Marlborough", "823", 215.5],
  ["Assabet Valley Regional V..", "822", 215.5],
];

function DistrictChart() {
  const ticks: [number, number, string][] = [
    [2213, 2221, "0"],
    [2345, 2343.6, "500"],
    [2475, 2473.5, "1000"],
    [2607, 2605.5, "1500"],
  ];
  return (
    <section className="w-[834px]">
      <ChartTitle className="w-[808px] tracking-[1.15px]">TotaL Enrollment (All Districts)</ChartTitle>
      <div className="mt-[25px] w-80 text-right text-[24px] leading-8 font-semibold tracking-[-0.3px] text-[#333]">District Name</div>
      <div className="flex h-[496px]">
        <div className="mt-px h-[494px] w-[793px] overflow-hidden pt-px">
          {DISTRICTS.map(([name, value, w]) => (
            <div key={name} className="flex h-10 items-center">
              <div className="w-80 text-right text-[24px] leading-10 font-light tracking-[0.27px] whitespace-nowrap text-[#666] [-webkit-text-stroke:0.3px]">
                <Clipped text={name} />
              </div>
              <div className="ml-[10px] flex h-10 items-center border-l border-[#eee]">
                <div className="h-[31px] border-y-2 border-r-2 border-[#d4d4d4] bg-[#4e79a7]" style={{ width: w }} />
                <div className="ml-[7px] text-[24px] leading-10 font-light tracking-[0.95px] text-black [-webkit-text-stroke:0.35px]">{value}</div>
              </div>
            </div>
          ))}
        </div>
        <div className="h-[496px] w-8 border-2 border-[#adadad]">
          <div className="h-4 border-b-2 border-[#adadad] bg-[#eee]" />
        </div>
      </div>
      <svg viewBox="1882 1451 834 50" className="-mt-0.5 block h-[50px] w-[834px]">
        <rect x="2213" y="1451" width="461" height="1.5" fill="#f1f1f1" />
        {ticks.map(([x, l, t]) => (
          <g key={t}>
            <rect x={x - 1} y="1453" width="2" height="9" fill="#eee" />
            <text x={l} y="1491.5" textAnchor="middle" className="fill-[#6f6f6f] text-[24px]">
              {t}
            </text>
          </g>
        ))}
      </svg>
    </section>
  );
}

export default function App() {
  return (
    <div className="h-[1536px] w-[2732px] overflow-hidden bg-white p-4 font-['Noto_Sans','Open_Sans',sans-serif]">
      <Header />
      <main>
        <div className="flex h-[622px]">
          <div className="w-[574px] shrink-0">
            <h2 className="h-[84px] pt-[9px] text-center text-[38px] leading-[60px] font-light tracking-[1.5px] text-[#333] [-webkit-text-stroke:0.4px]">
              District: Scituate
            </h2>
            <DistrictMap />
          </div>
          <StateMap />
          <Panels />
        </div>
        <div className="flex">
          <SchoolChart />
          <ScatterChart />
          <DistrictChart />
        </div>
      </main>
    </div>
  );
}
